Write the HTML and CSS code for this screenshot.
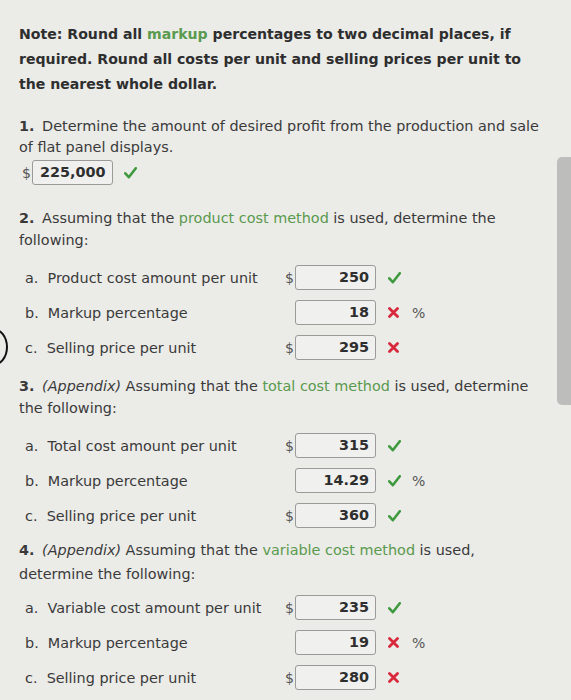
FILE: index.html
```html
<!DOCTYPE html>
<html>
<head>
<meta charset="utf-8">
<link rel="stylesheet" href="styles.css">
</head>
<body>
<div class="page">
  <p class="note">Note: Round all <span class="link">markup</span> percentages to two decimal places, if required. Round all costs per unit and selling prices per unit to the nearest whole dollar.</p>

  <section class="q q1">
    <p class="qtext"><b>1.</b> Determine the amount of desired profit from the production and sale of flat panel displays.</p>
    <div class="single">
      <span class="cur">$</span>
      <span class="box left">225,000</span>
      <span class="mark"><svg class="ok" width="13" height="12" viewBox="0 0 13 12"><path d="M1.3 6.3 L4.8 10.2 L11.8 1.2" fill="none" stroke="currentColor" stroke-width="2.6" stroke-linecap="round" stroke-linejoin="round"/></svg></span>
    </div>
  </section>

  <section class="q q2">
    <p class="qtext"><b>2.</b> Assuming that the <span class="link">product cost method</span> is used, determine the following:</p>
    <div class="rows">
      <span class="lbl">a.&nbsp; Product cost amount per unit</span><span class="cur">$</span><span class="box">250</span><span class="mark"><svg class="ok" width="13" height="12" viewBox="0 0 13 12"><path d="M1.3 6.3 L4.8 10.2 L11.8 1.2" fill="none" stroke="currentColor" stroke-width="2.6" stroke-linecap="round" stroke-linejoin="round"/></svg></span><span class="unit"></span>
      <span class="lbl">b.&nbsp; Markup percentage</span><span class="cur"></span><span class="box">18</span><span class="mark"><svg class="bad" width="11" height="11" viewBox="0 0 11 11"><path d="M1.5 1.5 L9.5 9.5 M9.5 1.5 L1.5 9.5" fill="none" stroke="currentColor" stroke-width="2.8" stroke-linecap="round"/></svg></span><span class="unit">%</span>
      <span class="lbl">c.&nbsp; Selling price per unit</span><span class="cur">$</span><span class="box">295</span><span class="mark"><svg class="bad" width="11" height="11" viewBox="0 0 11 11"><path d="M1.5 1.5 L9.5 9.5 M9.5 1.5 L1.5 9.5" fill="none" stroke="currentColor" stroke-width="2.8" stroke-linecap="round"/></svg></span><span class="unit"></span>
    </div>
  </section>

  <section class="q q3">
    <p class="qtext"><b>3.</b> <i>(Appendix)</i> Assuming that the <span class="link">total cost method</span> is used, determine the following:</p>
    <div class="rows">
      <span class="lbl">a.&nbsp; Total cost amount per unit</span><span class="cur">$</span><span class="box">315</span><span class="mark"><svg class="ok" width="13" height="12" viewBox="0 0 13 12"><path d="M1.3 6.3 L4.8 10.2 L11.8 1.2" fill="none" stroke="currentColor" stroke-width="2.6" stroke-linecap="round" stroke-linejoin="round"/></svg></span><span class="unit"></span>
      <span class="lbl">b.&nbsp; Markup percentage</span><span class="cur"></span><span class="box">14.29</span><span class="mark"><svg class="ok" width="13" height="12" viewBox="0 0 13 12"><path d="M1.3 6.3 L4.8 10.2 L11.8 1.2" fill="none" stroke="currentColor" stroke-width="2.6" stroke-linecap="round" stroke-linejoin="round"/></svg></span><span class="unit">%</span>
      <span class="lbl">c.&nbsp; Selling price per unit</span><span class="cur">$</span><span class="box">360</span><span class="mark"><svg class="ok" width="13" height="12" viewBox="0 0 13 12"><path d="M1.3 6.3 L4.8 10.2 L11.8 1.2" fill="none" stroke="currentColor" stroke-width="2.6" stroke-linecap="round" stroke-linejoin="round"/></svg></span><span class="unit"></span>
    </div>
  </section>

  <section class="q q4">
    <p class="qtext"><b>4.</b> <i>(Appendix)</i> Assuming that the <span class="link">variable cost method</span> is used, determine the following:</p>
    <div class="rows">
      <span class="lbl">a.&nbsp; Variable cost amount per unit</span><span class="cur">$</span><span class="box">235</span><span class="mark"><svg class="ok" width="13" height="12" viewBox="0 0 13 12"><path d="M1.3 6.3 L4.8 10.2 L11.8 1.2" fill="none" stroke="currentColor" stroke-width="2.6" stroke-linecap="round" stroke-linejoin="round"/></svg></span><span class="unit"></span>
      <span class="lbl">b.&nbsp; Markup percentage</span><span class="cur"></span><span class="box">19</span><span class="mark"><svg class="bad" width="11" height="11" viewBox="0 0 11 11"><path d="M1.5 1.5 L9.5 9.5 M9.5 1.5 L1.5 9.5" fill="none" stroke="currentColor" stroke-width="2.8" stroke-linecap="round"/></svg></span><span class="unit">%</span>
      <span class="lbl">c.&nbsp; Selling price per unit</span><span class="cur">$</span><span class="box">280</span><span class="mark"><svg class="bad" width="11" height="11" viewBox="0 0 11 11"><path d="M1.5 1.5 L9.5 9.5 M9.5 1.5 L1.5 9.5" fill="none" stroke="currentColor" stroke-width="2.8" stroke-linecap="round"/></svg></span><span class="unit"></span>
    </div>
  </section>
</div>
<div class="scrollbar"></div>
<div class="arc"></div>
</body>
</html>
```

FILE: styles.css
```css
html, body {
  margin: 0;
  padding: 0;
  background: #ebebe8;
}
body {
  width: 571px;
  height: 700px;
  overflow: hidden;
  position: relative;
  font-family: "DejaVu Sans", Verdana, sans-serif;
  color: #3a3a3a;
}
.page {
  padding: 22px 0 0 19px;
}
.note {
  margin: 0;
  font-weight: bold;
  font-size: 14.1px;
  line-height: 25px;
  color: #2e2e2e;
  width: 518px;
}
.link {
  color: #5a9a4e;
}
.q1 {
  margin-top: 19px;
}
.q2 {
  margin-top: 22px;
}
.q3 {
  margin-top: 15px;
}
.q4 {
  margin-top: 10px;
}
.qtext {
  margin: 0;
  font-size: 14.4px;
  line-height: 22px;
  width: 512px;
}
.q1 .qtext {
  line-height: 21px;
  width: 530px;
}
.q4 .qtext {
  line-height: 24px;
}
.qtext b {
  font-weight: bold;
  margin-right: 3px;
}
.single {
  display: flex;
  align-items: center;
  margin-top: 2px;
  margin-left: 3px;
}
.single .cur {
  width: 10px;
}
.single .mark {
  margin-left: 11px;
}
.box {
  display: inline-block;
  box-sizing: border-box;
  width: 81px;
  height: 25px;
  border: 1px solid #9a9a98;
  border-radius: 3px;
  background: #f0f0ee;
  font-weight: bold;
  font-size: 14.4px;
  line-height: 23px;
  text-align: right;
  padding: 0 6px;
  color: #2e2e2e;
}
.box.left {
  text-align: left;
  padding-left: 7px;
}
.cur {
  font-size: 14px;
  color: #555;
}
.mark {
  display: flex;
  align-items: center;
}
.ok {
  color: #3f9a3f;
}
.bad {
  color: #d8283c;
}
.rows {
  margin-top: 14px;
  display: grid;
  grid-template-columns: 260px 10px 81px 36px 20px;
  grid-auto-rows: 25px;
  row-gap: 10px;
  align-items: center;
  padding-left: 6px;
}
.q4 .rows {
  margin-top: 9px;
}
.rows .lbl {
  font-size: 14.4px;
}
.rows .mark {
  margin-left: 12px;
}
.unit {
  font-size: 14px;
  color: #555;
}
.scrollbar {
  position: absolute;
  right: 0;
  top: 157px;
  width: 14px;
  height: 248px;
  background: #bdbdbb;
  border-radius: 5px 0 0 5px;
}
.arc {
  position: absolute;
  left: -22px;
  top: 328px;
  width: 26px;
  height: 34px;
  border: 2.5px solid #111;
  border-radius: 50%;
}
```
